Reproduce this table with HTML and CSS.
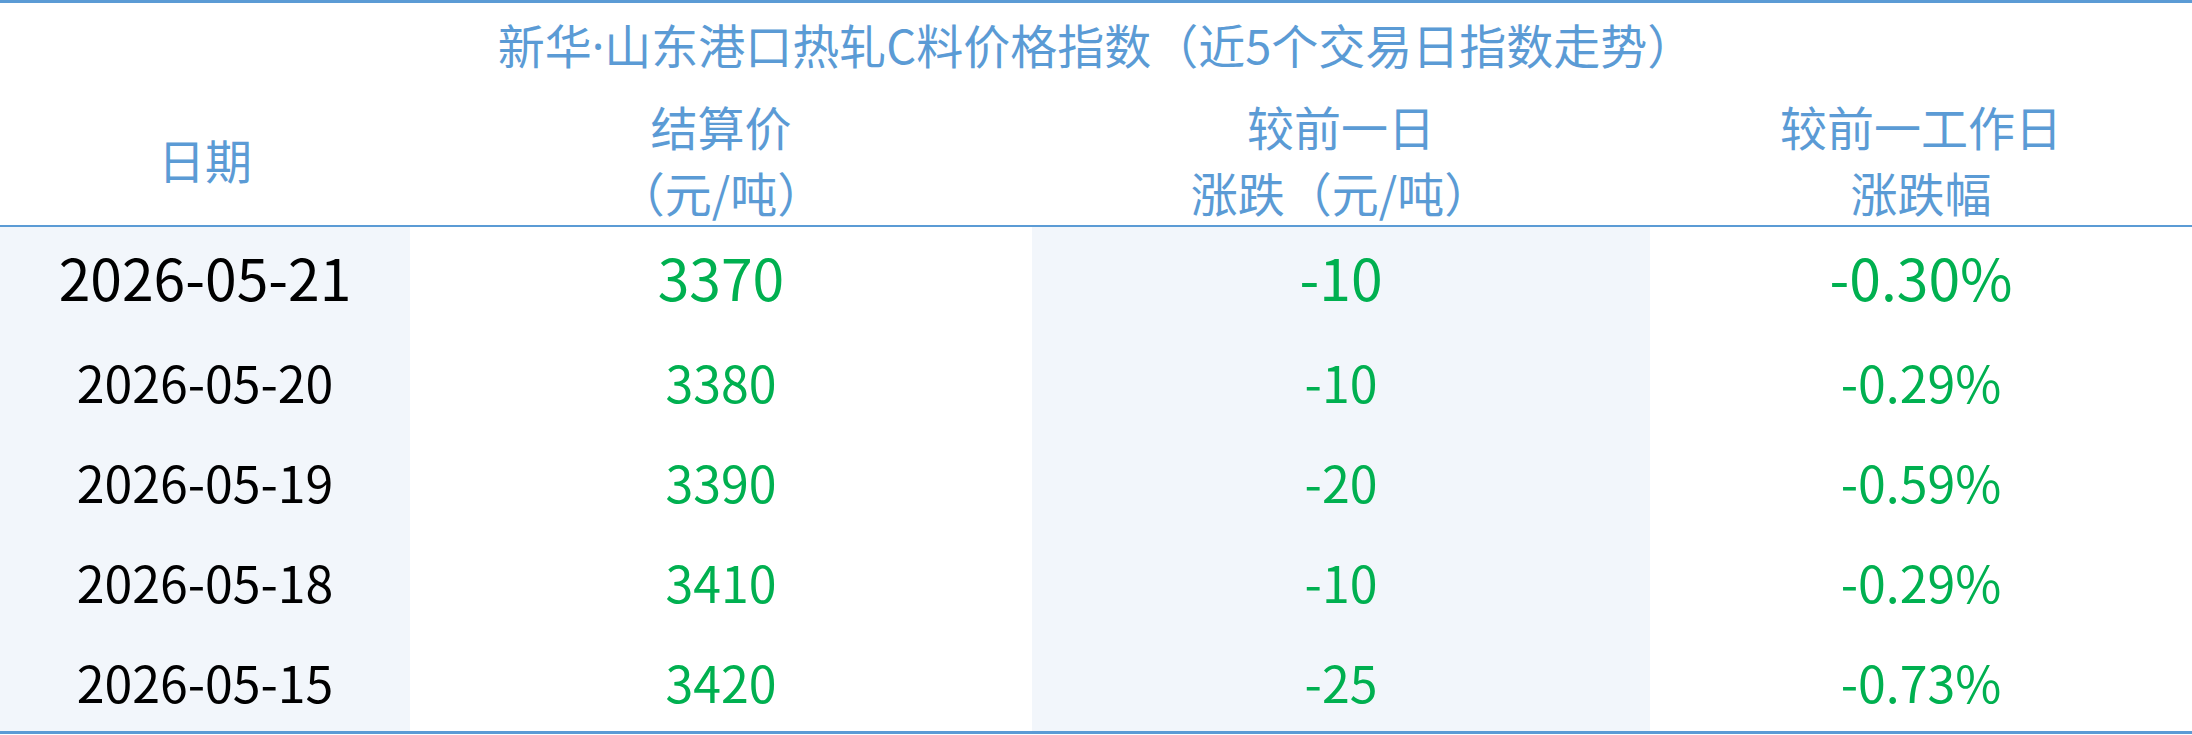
FILE: index.html
```html
<!DOCTYPE html>
<html lang="zh-CN">
<head>
<meta charset="utf-8">
<title>新华·山东港口热轧C料价格指数</title>
<link rel="stylesheet" href="styles.css">
</head>
<body>
<table class="index-table">
  <colgroup>
    <col class="c-date">
    <col class="c-price">
    <col class="c-chg">
    <col class="c-pct">
  </colgroup>
  <thead>
    <tr class="title-row">
      <th colspan="4">新华<span class="dot">·</span>山东港口热轧C料价格指数（近5个交易日指数走势）</th>
    </tr>
    <tr class="head-row">
      <th>日期</th>
      <th>结算价<br>（元/吨）</th>
      <th>较前一日<br>涨跌（元/吨）</th>
      <th>较前一工作日<br>涨跌幅</th>
    </tr>
  </thead>
  <tbody>
    <tr class="latest">
      <td class="date shade">2026-05-21</td>
      <td class="num">3370</td>
      <td class="num shade">-10</td>
      <td class="num">-0.30%</td>
    </tr>
    <tr>
      <td class="date shade">2026-05-20</td>
      <td class="num">3380</td>
      <td class="num shade">-10</td>
      <td class="num">-0.29%</td>
    </tr>
    <tr>
      <td class="date shade">2026-05-19</td>
      <td class="num">3390</td>
      <td class="num shade">-20</td>
      <td class="num">-0.59%</td>
    </tr>
    <tr>
      <td class="date shade">2026-05-18</td>
      <td class="num">3410</td>
      <td class="num shade">-10</td>
      <td class="num">-0.29%</td>
    </tr>
    <tr>
      <td class="date shade">2026-05-15</td>
      <td class="num">3420</td>
      <td class="num shade">-25</td>
      <td class="num">-0.73%</td>
    </tr>
  </tbody>
</table>
</body>
</html>
```
FILE: styles.css
```css
html, body {
  margin: 0;
  padding: 0;
  background: #ffffff;
}

body {
  font-family: "Noto Sans CJK SC", "Noto Sans", sans-serif;
}

.index-table {
  width: 2192px;
  border-collapse: collapse;
  table-layout: fixed;
  border-top: 3px solid #5b9bd5;
  border-bottom: 3px solid #5b9bd5;
}

.c-date { width: 410px; }
.c-price { width: 622px; }
.c-chg { width: 618px; }
.c-pct { width: 542px; }

.index-table th,
.index-table td {
  padding: 0;
  text-align: center;
  vertical-align: middle;
}

.index-table th {
  color: #5b9bd5;
  font-weight: normal;
}

.title-row th {
  height: 83px;
  padding-bottom: 6px;
  font-size: 47px;
  line-height: 1;
}

.dot {
  font-family: "Noto Sans", sans-serif;
}

.head-row th {
  height: 133px;
  font-size: 47px;
  line-height: 66px;
  border-bottom: 2px solid #5b9bd5;
}

.index-table td {
  height: 100px;
  font-size: 50px;
  line-height: 1;
}

.index-table tr.latest td {
  height: 98px;
  padding-bottom: 6px;
  font-size: 57px;
}

.shade {
  background: #f2f6fb;
}

.date {
  color: #000000;
}

.num {
  color: #00b050;
}
```
